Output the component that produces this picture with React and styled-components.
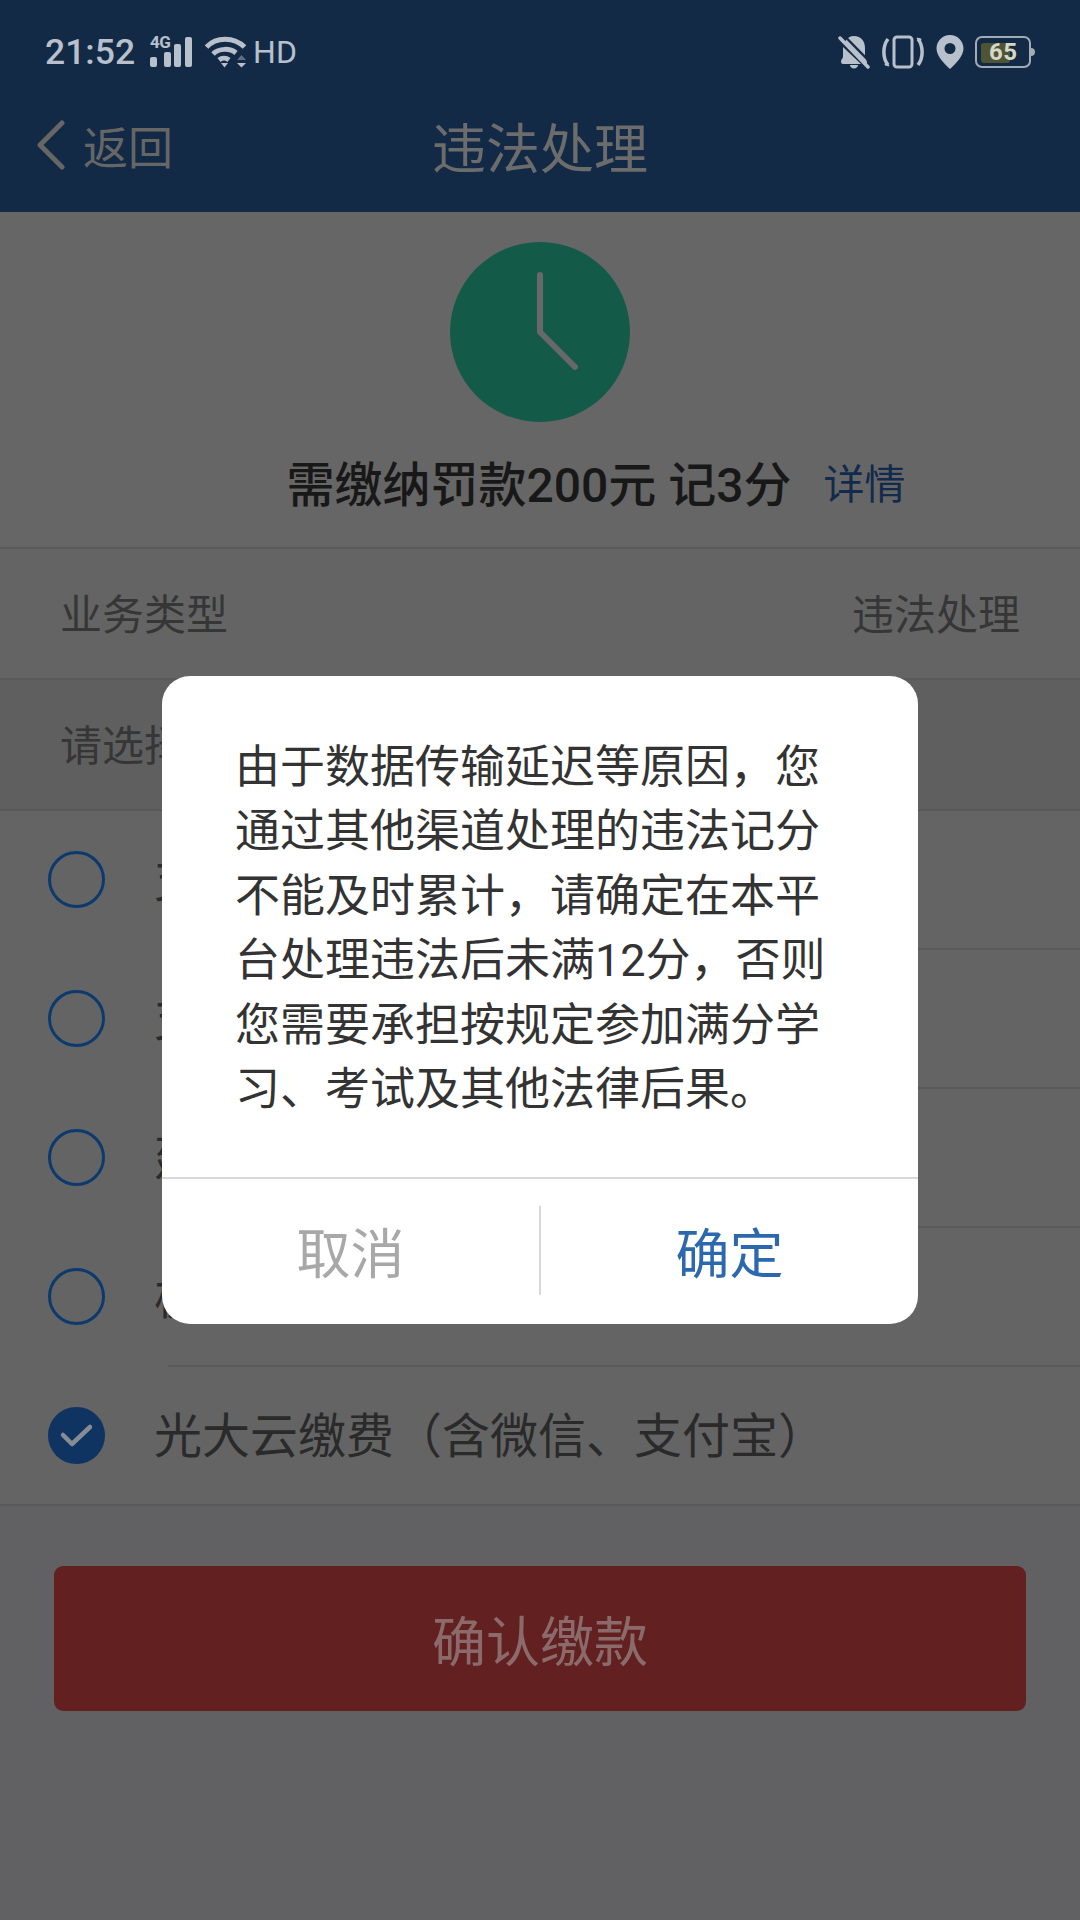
import React from "react";
import styled, { createGlobalStyle } from "styled-components";

const Global = createGlobalStyle`
  html, body { margin: 0; padding: 0; background: #636365; }
  body { font-family: Roboto, "Noto Sans CJK SC", sans-serif; }
`;

const Page = styled.div`
  position: relative;
  width: 1080px;
  height: 1920px;
  overflow: hidden;
  background: #646464;
  display: flex;
  flex-direction: column;
`;

const Header = styled.header`
  background: #132a46;
  height: 212px;
  flex: none;
`;

const StatusBar = styled.div`
  height: 104px;
  padding: 0 45px;
  box-sizing: border-box;
  display: flex;
  align-items: center;
  justify-content: space-between;
  color: #b8c0cc;
`;

const StatusGroup = styled.div`
  display: flex;
  align-items: center;
  gap: 11px;
`;

const Clock = styled.span`
  font-size: 35.5px;
  font-weight: 500;
`;

const Hd = styled.span`
  font-size: 32px;
  margin-left: -5px;
`;

const Signal = styled.div`
  position: relative;
  width: 44px;
  height: 32px;
  margin-left: 4px;
`;

const SignalLabel = styled.span`
  position: absolute;
  left: 0;
  top: -2px;
  font-size: 17px;
  line-height: 16px;
  font-weight: 700;
  letter-spacing: -0.5px;
`;

const BatteryBox = styled.div`
  position: relative;
  width: 60px;
  height: 32px;
`;

const BatteryText = styled.span`
  position: absolute;
  left: 14px;
  top: 0;
  line-height: 32px;
  font-size: 24px;
  font-weight: 700;
  color: #d5d8c8;
  letter-spacing: 0.5px;
`;

const NavBar = styled.nav`
  height: 108px;
  display: grid;
  grid-template-columns: 1fr auto 1fr;
  align-items: center;
  padding-bottom: 26px;
  box-sizing: border-box;
`;

const Back = styled.div`
  display: flex;
  align-items: center;
  gap: 17px;
  padding-left: 36px;
  font-size: 45px;
  color: #666666;
`;

const Title = styled.div`
  font-size: 54px;
  color: #6c6c6c;
`;

const Summary = styled.section`
  height: 335px;
  background: #666666;
  box-sizing: border-box;
  padding-top: 30px;
  display: flex;
  flex-direction: column;
  align-items: center;
`;

const Amount = styled.div`
  margin-top: 25px;
  padding-left: 112px;
  display: flex;
  align-items: center;
  gap: 32px;
  height: 68px;
`;

const AmountText = styled.span`
  font-size: 48px;
  font-weight: 500;
  color: #181818;
  white-space: pre;
`;

const Details = styled.span`
  font-size: 41px;
  color: #122a4c;
`;

const InfoRow = styled.div`
  height: 131px;
  box-sizing: border-box;
  border-top: 2px solid #5a5a5a;
  padding: 0 60px 4px 60px;
  display: flex;
  align-items: center;
  justify-content: space-between;
  font-size: 42px;
  color: #363636;
  background: ${(p) => p.$bg || "#646464"};
`;

const Options = styled.ul`
  list-style: none;
  margin: 0;
  padding: 0;
  border-top: 2px solid #5a5a5a;
`;

const Option = styled.li`
  position: relative;
  height: 139px;
  box-sizing: border-box;
  padding: 0 0 3px 48px;
  display: flex;
  align-items: center;
  gap: 49px;
  font-size: 48px;
  color: #2a2a2a;
  &::after {
    content: "";
    position: absolute;
    left: 168px;
    right: 0;
    bottom: 0;
    height: 2px;
    background: #5a5a5a;
  }
  &:last-child::after {
    left: 0;
  }
`;

const OptionLabel = styled.span`
  padding-bottom: 7px;
`;

const Radio = styled.span`
  flex: none;
  width: 57px;
  height: 57px;
  box-sizing: border-box;
  border-radius: 50%;
  border: 3px solid ${(p) => (p.$on ? "#0f3462" : "#0d3a6e")};
  background: ${(p) => (p.$on ? "#0f3462" : "transparent")};
  display: flex;
  align-items: center;
  justify-content: center;
`;

const Footer = styled.div`
  flex: 1;
  background: #616163;
  padding: 60px 54px 0;
`;

const PayButton = styled.div`
  height: 145px;
  border-radius: 9px;
  background: #622020;
  color: #8a6a6a;
  font-size: 54px;
  display: flex;
  align-items: center;
  justify-content: center;
`;

const Dialog = styled.div`
  position: absolute;
  left: 162px;
  top: 676px;
  width: 756px;
  height: 648px;
  background: #ffffff;
  border-radius: 28px;
  display: flex;
  flex-direction: column;
`;

const DialogBody = styled.div`
  height: 503px;
  box-sizing: border-box;
  padding: 60px 0 0 73px;
  font-size: 45px;
  line-height: 64.4px;
  color: #333333;
  white-space: nowrap;
  border-bottom: 2px solid #d8d8d8;
`;

const DialogActions = styled.div`
  flex: 1;
  display: flex;
  align-items: center;
`;

const Action = styled.div`
  flex: 1;
  text-align: center;
  font-size: 54px;
  color: ${(p) => (p.$primary ? "#2b68ae" : "#a8a8a8")};
  padding-bottom: 2px;
`;

const ActionDivider = styled.div`
  flex: none;
  width: 2px;
  height: 89px;
  margin-bottom: 3px;
  background: #d8d8d8;
`;

const noticeLines = [
  "由于数据传输延迟等原因，您",
  "通过其他渠道处理的违法记分",
  "不能及时累计，请确定在本平",
  "台处理违法后未满12分，否则",
  "您需要承担按规定参加满分学",
  "习、考试及其他法律后果。",
];

const payOptions = [
  { name: "支付宝缴费" },
  { name: "支付平台" },
  { name: "建设银行" },
  { name: "极速缴费" },
  { name: "光大云缴费（含微信、支付宝）", on: true },
];

const SignalBars = () => (
  <svg width="44" height="32" viewBox="0 0 44 32" fill="#b8c0cc">
    <rect x="0" y="21" width="7" height="10" rx="2" />
    <rect x="14" y="16" width="7" height="15" rx="2" />
    <rect x="24" y="8" width="7" height="23" rx="2" />
    <rect x="35" y="1" width="7" height="30" rx="2" />
  </svg>
);

const WifiIcon = () => (
  <svg width="42" height="32" viewBox="0 0 42 32" fill="none">
    <g stroke="#b8c0cc" strokeWidth="5">
      <path d="M1.5 11 C11 0.5 29 0.5 39.5 11" />
      <path d="M8 18 C14 12 25 12 31 17" />
      <path d="M14 24 C17 21.5 21 21.5 24 24" />
    </g>
    <path d="M16 27 h7 l-3.5 4.500z" fill="#b8c0cc" />
    <path d="M32 24 l4.500 -5 4.500 5z" fill="#5f6f85" />
    <path d="M32 27 h9 l-4.500 4.500z" fill="#b8c0cc" />
  </svg>
);

const BellOff = () => (
  <svg width="32" height="34" viewBox="0 0 32 34" fill="#b8c0cc">
    <path d="M6 8 L29 29 V27 C29 25 27 24 27 21 V13 C27 5 22 1 16 1 C12 1 9 3 7.500 6z" />
    <path d="M5 12 V21 C5 24 3 24 3 27 C3 28 4 29 5 29 H23z" />
    <path d="M12 30 H20 C20 32 18 33.500 16 33.500 C14 33.500 12 32 12 30z" />
    <path d="M2 3 L30 32" stroke="#b8c0cc" strokeWidth="3.500" strokeLinecap="round" />
    <path d="M6.500 1 L31 26" stroke="#132a46" strokeWidth="2.500" />
  </svg>
);

const VibrateIcon = () => (
  <svg width="44" height="34" viewBox="0 0 44 34" fill="none" stroke="#b8c0cc" strokeWidth="3">
    <rect x="13" y="2" width="18" height="30" rx="3" />
    <path d="M7 4 C1.500 11 1.500 23 7 30" strokeWidth="3.500" />
    <path d="M37 4 C42.500 11 42.500 23 37 30" strokeWidth="3.500" />
    <path d="M36 3 l4 1 -1 4z" fill="#b8c0cc" strokeWidth="1" />
    <path d="M8 31 l-4 -1 1 -4z" fill="#b8c0cc" strokeWidth="1" />
  </svg>
);

const PinIcon = () => (
  <svg width="28" height="34" viewBox="0 0 27 34">
    <path
      fillRule="evenodd"
      fill="#b8c0cc"
      d="M13.500 0 C21 0 27 6 27 13.500 C27 21 19 29 13.500 34 C8 29 0 21 0 13.500 C0 6 6 0 13.500 0z M13.500 8 A5.500 5.500 0 1 0 13.500 19 A5.500 5.500 0 1 0 13.500 8z"
    />
  </svg>
);

const BatteryShell = () => (
  <svg width="60" height="32" viewBox="0 0 60 32" fill="none">
    <rect x="1" y="1" width="54" height="30" rx="6" stroke="#a3abb6" strokeWidth="2" />
    <rect x="6" y="7" width="29" height="20" rx="3" fill="#4f5534" />
    <path d="M56 12 C59 12 60 14 60 16 C60 18 59 20 56 20z" fill="#a3abb6" />
  </svg>
);

const Chevron = () => (
  <svg width="30" height="50" viewBox="0 0 30 50" fill="none">
    <path d="M26 3 L4 25 L26 47" stroke="#666666" strokeWidth="5" strokeLinecap="round" strokeLinejoin="round" />
  </svg>
);

const ClockIcon = () => (
  <svg width="180" height="180" viewBox="0 0 180 180">
    <circle cx="90" cy="90" r="90" fill="#145a48" />
    <path d="M90 33 V90 L125 125" fill="none" stroke="#686868" strokeWidth="6" strokeLinecap="round" strokeLinejoin="round" />
  </svg>
);

const CheckMark = () => (
  <svg width="36" height="30" viewBox="0 0 36 30" fill="none">
    <path d="M4 15 L13 24 L31 7" stroke="#868c94" strokeWidth="4.500" strokeLinecap="round" strokeLinejoin="round" />
  </svg>
);

export default function App() {
  return (
    <Page>
      <Global />
      <Header>
        <StatusBar>
          <StatusGroup>
            <Clock>21:52</Clock>
            <Signal>
              <SignalLabel>4G</SignalLabel>
              <SignalBars />
            </Signal>
            <WifiIcon />
            <Hd>HD</Hd>
          </StatusGroup>
          <StatusGroup>
            <BellOff />
            <VibrateIcon />
            <PinIcon />
            <BatteryBox>
              <BatteryShell />
              <BatteryText>65</BatteryText>
            </BatteryBox>
          </StatusGroup>
        </StatusBar>
        <NavBar>
          <Back>
            <Chevron />
            <span>返回</span>
          </Back>
          <Title>违法处理</Title>
          <span />
        </NavBar>
      </Header>

      <Summary>
        <ClockIcon />
        <Amount>
          <AmountText>需缴纳罚款200元 记3分</AmountText>
          <Details>详情</Details>
        </Amount>
      </Summary>

      <InfoRow>
        <span>业务类型</span>
        <span>违法处理</span>
      </InfoRow>
      <InfoRow $bg="#5f5f5f">
        <span>请选择缴款方式</span>
      </InfoRow>

      <Options>
        {payOptions.map((o) => (
          <Option key={o.name}>
            <Radio $on={o.on}>{o.on && <CheckMark />}</Radio>
            <OptionLabel>{o.name}</OptionLabel>
          </Option>
        ))}
      </Options>

      <Footer>
        <PayButton>确认缴款</PayButton>
      </Footer>

      <Dialog>
        <DialogBody>
          {noticeLines.map((line) => (
            <div key={line}>{line}</div>
          ))}
        </DialogBody>
        <DialogActions>
          <Action>取消</Action>
          <ActionDivider />
          <Action $primary>确定</Action>
        </DialogActions>
      </Dialog>
    </Page>
  );
}
